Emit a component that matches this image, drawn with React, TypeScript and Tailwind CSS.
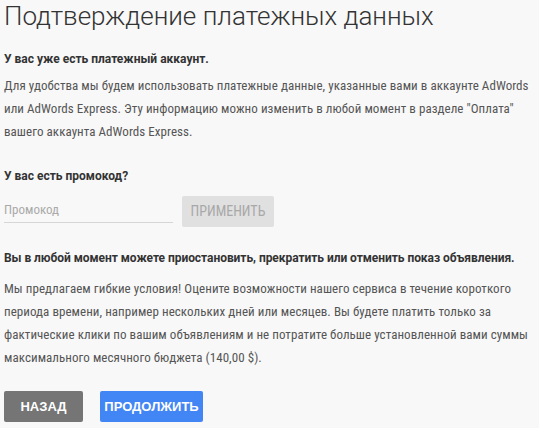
import React from 'react';

const App: React.FC = () => {
  return (
    <div className="w-[539px] h-[428px] overflow-hidden bg-[#f8f8f8] px-[4px] font-['Roboto',sans-serif] text-[#444]">
      <h1 className="text-[26px] leading-[32px] font-light text-[#333]">
        Подтверждение платежных данных
      </h1>

      <p className="mt-[19px] text-[12px] leading-[16px] font-bold text-[#333]">
        У вас уже есть платежный аккаунт.
      </p>
      <p className="mt-[7px] text-[13px] leading-[23px] [font-stretch:87.5%] tracking-[0.05px] text-[#555]">
        Для удобства мы будем использовать платежные данные, указанные вами в аккаунте AdWords
        или AdWords Express. Эту информацию можно изменить в любой момент в разделе "Оплата"
        вашего аккаунта AdWords Express.
      </p>

      <p className="mt-[25px] text-[12px] leading-[16px] font-bold text-[#333]">
        У вас есть промокод?
      </p>
      <div className="mt-[12px] flex items-end gap-[9px]">
        <input
          type="text"
          placeholder="Промокод"
          className="w-[169px] h-[26px] bg-transparent border-b border-[#d6d6d6] text-[13px] [font-stretch:87.5%] text-[#555] placeholder:text-[#aaa] outline-none"
        />
        <button className="w-[92px] h-[31px] -mb-[4px] rounded-[2px] bg-[#e0e0e0] text-[#a8a8a8] text-[14px] [font-stretch:87.5%]">
          ПРИМЕНИТЬ
        </button>
      </div>

      <p className="mt-[27px] text-[12px] leading-[16px] font-bold tracking-[-0.05px] text-[#333]">
        Вы в любой момент можете приостановить, прекратить или отменить показ объявления.
      </p>
      <p className="mt-[11px] text-[13px] leading-[23px] [font-stretch:87.5%] tracking-[0.05px] text-[#555]">
        Мы предлагаем гибкие условия! Оцените возможности нашего сервиса в течение короткого
        периода времени, например нескольких дней или месяцев. Вы будете платить только за
        фактические клики по вашим объявлениям и не потратите больше установленной вами суммы
        максимального месячного бюджета (140,00 $).
      </p>

      <div className="mt-[22px] flex gap-[17px]">
        <button className="w-[79px] h-[31px] rounded-[2px] bg-[#757575] text-white text-[13px] font-bold font-['Liberation_Sans',Arial,sans-serif]">
          НАЗАД
        </button>
        <button className="w-[103px] h-[31px] rounded-[2px] bg-[#4285f4] text-white text-[13px] font-bold font-['Liberation_Sans',Arial,sans-serif]">
          ПРОДОЛЖИТЬ
        </button>
      </div>
    </div>
  );
};

export default App;
